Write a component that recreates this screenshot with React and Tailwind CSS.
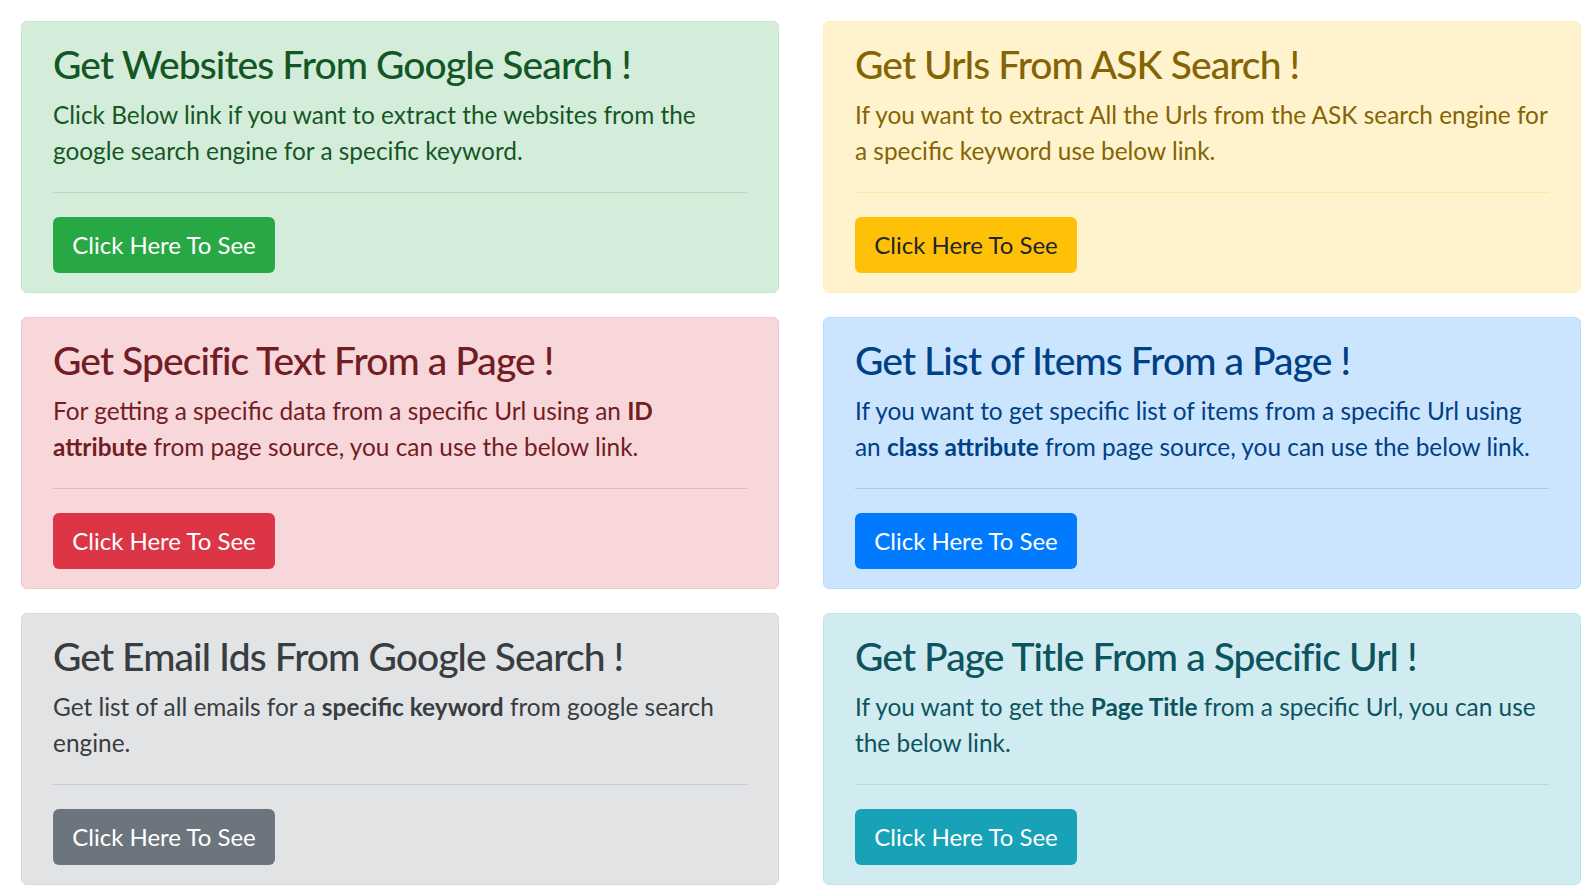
const cards = [
  {
    title: "Get Websites From Google Search !",
    body: (
      <>Click Below link if you want to extract the websites from the google search engine for a specific keyword.</>
    ),
    box: "bg-[#d4edda] border-[#c3e6cb] text-[#155724]",
    hr: "border-[#b1dfbb]",
    btn: "bg-[#28a745] text-white",
  },
  {
    title: "Get Urls From ASK Search !",
    body: (
      <>If you want to extract All the Urls from the ASK search engine for a specific keyword use below link.</>
    ),
    box: "bg-[#fff3cd] border-[#ffeeba] text-[#856404]",
    hr: "border-[#ffe8a1]",
    btn: "bg-[#ffc107] text-[#212529]",
  },
  {
    title: "Get Specific Text From a Page !",
    body: (
      <>
        For getting a specific data from a specific Url using an <b>ID attribute</b> from page source, you can use the below link.
      </>
    ),
    box: "bg-[#f8d7da] border-[#f5c6cb] text-[#721c24]",
    hr: "border-[#f1b0b7]",
    btn: "bg-[#dc3545] text-white",
  },
  {
    title: "Get List of Items From a Page !",
    body: (
      <>
        If you want to get specific list of items from a specific Url using an <b>class attribute</b> from page source, you can use the below link.
      </>
    ),
    box: "bg-[#cce5ff] border-[#b8daff] text-[#004085]",
    hr: "border-[#9fcdff]",
    btn: "bg-[#007bff] text-white",
  },
  {
    title: "Get Email Ids From Google Search !",
    body: (
      <>
        Get list of all emails for a <b>specific keyword</b> from google search engine.
      </>
    ),
    box: "bg-[#e2e3e5] border-[#d6d8db] text-[#383d41]",
    hr: "border-[#c8cbcf]",
    btn: "bg-[#6c757d] text-white",
  },
  {
    title: "Get Page Title From a Specific Url !",
    body: (
      <>
        If you want to get the <b>Page Title</b> from a specific Url, you can use the below link.
      </>
    ),
    box: "bg-[#d1ecf1] border-[#bee5eb] text-[#0c5460]",
    hr: "border-[#abdde5]",
    btn: "bg-[#17a2b8] text-white",
  },
];

export default function App() {
  return (
    <div className="min-h-screen bg-white pl-[21px] pt-[21px] font-['Lato',sans-serif]">
      <div className="grid grid-cols-[758px_758px] gap-x-[44px] gap-y-[24px]">
        {cards.map((c) => (
          <div
            key={c.title}
            className={`rounded-[6px] border pl-[31px] pr-[29px] pt-[17px] pb-[19px] ${c.box}`}
          >
            <h3 className="mb-[8px] text-[39px] leading-[50px] font-medium tracking-[-0.9px]">
              {c.title}
            </h3>
            <p className="mb-[24px] text-[24.4px] leading-[35.5px]">{c.body}</p>
            <hr className={`mb-[24px] mr-[2px] border-t ${c.hr}`} />
            <button
              className={`h-[56px] w-[222px] rounded-[6px] text-[24px] ${c.btn}`}
            >
              Click Here To See
            </button>
          </div>
        ))}
      </div>
    </div>
  );
}
